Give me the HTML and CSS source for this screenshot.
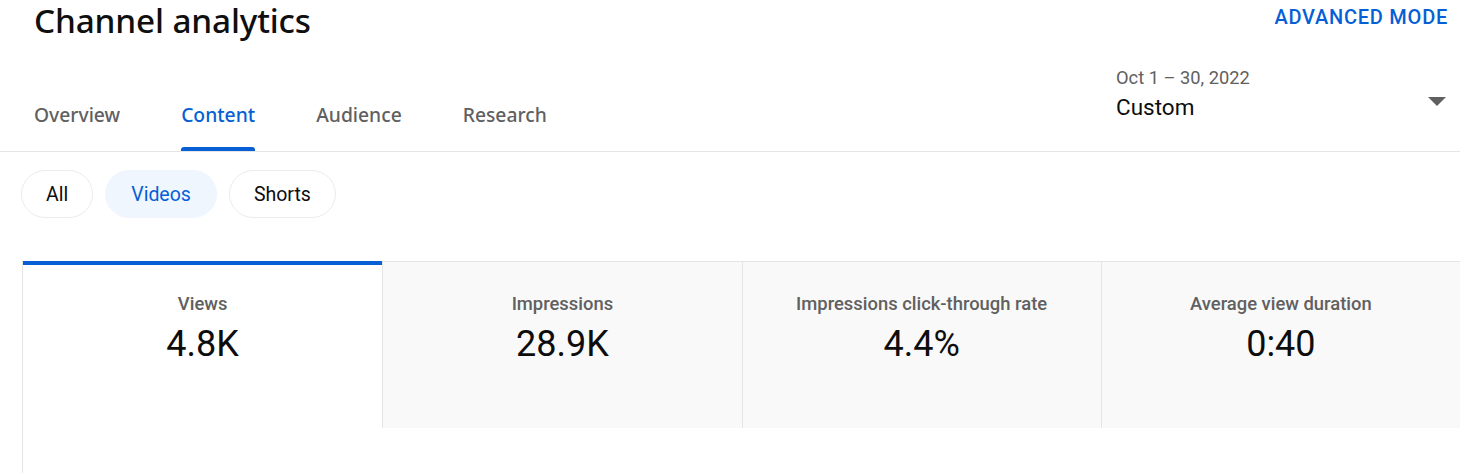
FILE: index.html
```html
<!DOCTYPE html>
<html lang="en">
<head>
<meta charset="utf-8">
<title>Channel analytics</title>
<link rel="stylesheet" href="styles.css">
</head>
<body>
<div class="page">
  <header class="top">
    <h1 class="title">Channel analytics</h1>
    <a class="advanced" href="#">ADVANCED MODE</a>
  </header>

  <div class="navrow">
    <nav class="tabs">
      <a class="tab" href="#">Overview</a>
      <a class="tab active" href="#">Content</a>
      <a class="tab" href="#">Audience</a>
      <a class="tab" href="#">Research</a>
    </nav>
    <div class="date-picker">
      <div class="date-text">
        <div class="range">Oct 1 – 30, 2022</div>
        <div class="preset">Custom</div>
      </div>
      <svg class="caret" width="18" height="9" viewBox="0 0 18 9" aria-hidden="true"><polygon points="0,0 18,0 9,9" fill="#606060"/></svg>
    </div>
  </div>

  <div class="chips">
    <button class="chip">All</button>
    <button class="chip selected">Videos</button>
    <button class="chip">Shorts</button>
  </div>

  <section class="metrics">
    <div class="cards">
      <div class="card active">
        <div class="label">Views</div>
        <div class="value">4.8K</div>
      </div>
      <div class="card">
        <div class="label">Impressions</div>
        <div class="value">28.9K</div>
      </div>
      <div class="card">
        <div class="label">Impressions click-through rate</div>
        <div class="value">4.4%</div>
      </div>
      <div class="card">
        <div class="label">Average view duration</div>
        <div class="value">0:40</div>
      </div>
    </div>
  </section>
</div>
</body>
</html>
```

FILE: styles.css
```css
* { box-sizing: border-box; }

html, body {
  margin: 0;
  padding: 0;
  background: #ffffff;
  overflow: hidden;
}

body {
  font-family: Roboto, "Liberation Sans", Arial, sans-serif;
  color: #0d0d0d;
  width: 1460px;
  height: 473px;
}

.top {
  display: flex;
  justify-content: space-between;
  align-items: flex-start;
  padding: 0 12px 0 34px;
  height: 55px;
}

.title {
  margin: 0;
  padding-top: 2px;
  font-family: "Noto Sans", "Open Sans", sans-serif;
  font-weight: 500;
  font-size: 33.3px;
  line-height: 36px;
  letter-spacing: -0.15px;
  color: #0f0f0f;
}

.advanced {
  font-family: Roboto, sans-serif;
  font-weight: 500;
  font-size: 20px;
  line-height: 24px;
  margin-top: 5px;
  color: #065fd4;
  text-decoration: none;
  letter-spacing: 0.75px;
}

.navrow {
  display: flex;
  justify-content: space-between;
  align-items: stretch;
  border-bottom: 1px solid #e5e5e5;
  height: 97px;
}

.tabs {
  display: flex;
  align-items: flex-end;
  gap: 61px;
  padding-left: 34px;
}

.tab {
  position: relative;
  font-family: "Noto Sans", "Open Sans", sans-serif;
  font-weight: 500;
  font-size: 19.3px;
  line-height: 24px;
  color: #606060;
  text-decoration: none;
  padding-bottom: 24px;
}

.tab.active {
  color: #065fd4;
}

.tab.active::after {
  content: "";
  position: absolute;
  left: 0;
  right: 0;
  bottom: 0;
  height: 4px;
  background: #065fd4;
  border-radius: 3px 3px 0 0;
}

.date-picker {
  display: flex;
  align-items: center;
  width: 344px;
  padding: 12px 14px 0 0;
  align-self: flex-start;
}

.date-text {
  flex: 1;
}

.range {
  font-size: 18.3px;
  line-height: 22px;
  color: #606060;
}

.preset {
  margin-top: 4px;
  font-size: 22.5px;
  line-height: 28px;
  color: #0d0d0d;
}

.caret {
  display: block;
  margin-top: 14px;
}

.chips {
  display: flex;
  gap: 12px;
  padding: 18px 0 0 21px;
  height: 109px;
}

.chip {
  height: 48px;
  padding: 0 24px;
  border: 1px solid #ececec;
  border-radius: 24px;
  background: #ffffff;
  font-family: Roboto, sans-serif;
  font-size: 19.5px;
  color: #0d0d0d;
}

.chip.selected {
  padding: 0 25px;
  background: #f0f6fd;
  border-color: #f0f6fd;
  color: #065fd4;
}

.metrics {
  margin-left: 22px;
  width: 1438px;
  border-left: 1px solid #e5e5e5;
  height: 220px;
}

.cards {
  display: grid;
  grid-template-columns: repeat(4, 1fr);
}

.card {
  height: 167px;
  background: #f9f9f9;
  border-top: 1px solid #e5e5e5;
  border-left: 1px solid #e5e5e5;
  text-align: center;
  padding-top: 30px;
}

.card:first-child {
  border-left: none;
}

.card.active {
  background: #ffffff;
  border-top-color: #065fd4;
  box-shadow: inset 0 3px 0 #065fd4;
}

.label {
  font-size: 18.4px;
  font-weight: 500;
  line-height: 24px;
  color: #606060;
}

.value {
  margin-top: 6px;
  font-size: 36px;
  line-height: 44px;
  color: #0d0d0d;
}
```
